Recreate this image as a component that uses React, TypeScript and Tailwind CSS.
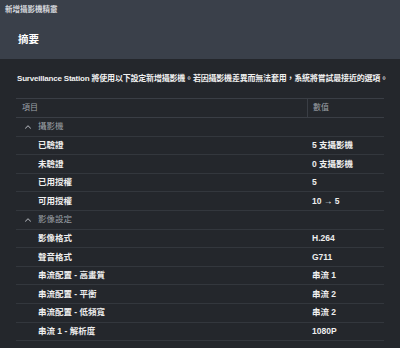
import { ChevronUp } from 'lucide-react';

type Row =
  | { kind: 'group'; label: string }
  | { kind: 'item'; label: string; value: string };

const ROWS: Row[] = [
  { kind: 'group', label: '攝影機' },
  { kind: 'item', label: '已驗證', value: '5 支攝影機' },
  { kind: 'item', label: '未驗證', value: '0 支攝影機' },
  { kind: 'item', label: '已用授權', value: '5' },
  { kind: 'item', label: '可用授權', value: '10 → 5' },
  { kind: 'group', label: '影像設定' },
  { kind: 'item', label: '影像格式', value: 'H.264' },
  { kind: 'item', label: '聲音格式', value: 'G711' },
  { kind: 'item', label: '串流配置 - 高畫質', value: '串流 1' },
  { kind: 'item', label: '串流配置 - 平衡', value: '串流 2' },
  { kind: 'item', label: '串流配置 - 低頻寬', value: '串流 2' },
  { kind: 'item', label: '串流 1 - 解析度', value: '1080P' },
];

export default function App() {
  return (
    <div
      className="w-[400px] h-[348px] overflow-hidden bg-[#24272c] flex flex-col"
      style={{ fontFamily: '"Liberation Sans", "Noto Sans CJK TC", sans-serif' }}
    >
      {/* Wizard header */}
      <div className="h-[59px] shrink-0 bg-[#3a404a] flex flex-col">
        <div className="pl-[5px] pt-[5px] text-[7.5px] leading-[10px] text-[#d4d7dc] font-bold">新增攝影機精靈</div>
        <div className="pl-[18px] pt-[17px] text-[10.5px] leading-[14px] text-white font-bold">摘要</div>
      </div>

      <div className="flex-1 px-[16px] pt-[13px] flex flex-col">
        <p className="pl-[1px] text-[8px] leading-[14px] tracking-[-0.2px] font-bold text-[#f0f0f0] whitespace-nowrap">
          Surveillance Station 將使用以下設定新增攝影機。若因攝影機差異而無法套用，系統將嘗試最接近的選項。
        </p>

        <div className="mt-[12px] border-t border-[#3a3e45]">
          {/* table head */}
          <div className="h-[19px] flex items-center border-b border-[#3a3e45] text-[8px] text-[#9ca0a6]">
            <div className="w-[291px] pl-[6px]">項目</div>
            <div className="h-full border-l border-[#3a3e45] pl-[5px] flex items-center">數值</div>
          </div>

          {ROWS.map((r, i) =>
            r.kind === 'group' ? (
              <div key={i} className="h-[18.6px] flex items-center border-b border-[#33373d] text-[8.5px] text-[#9ca0a6]">
                <ChevronUp size={10} strokeWidth={2.5} className="ml-[7px] text-[#a4a8ae]" />
                <span className="ml-[5px]">{r.label}</span>
              </div>
            ) : (
              <div key={i} className="h-[18.6px] flex items-center border-b border-[#33373d] text-[8.5px] font-bold text-[#eeeeee]">
                <div className="w-[296px] pl-[22px] whitespace-nowrap">{r.label}</div>
                <div className="whitespace-nowrap">{r.value}</div>
              </div>
            )
          )}
        </div>
      </div>
    </div>
  );
}
